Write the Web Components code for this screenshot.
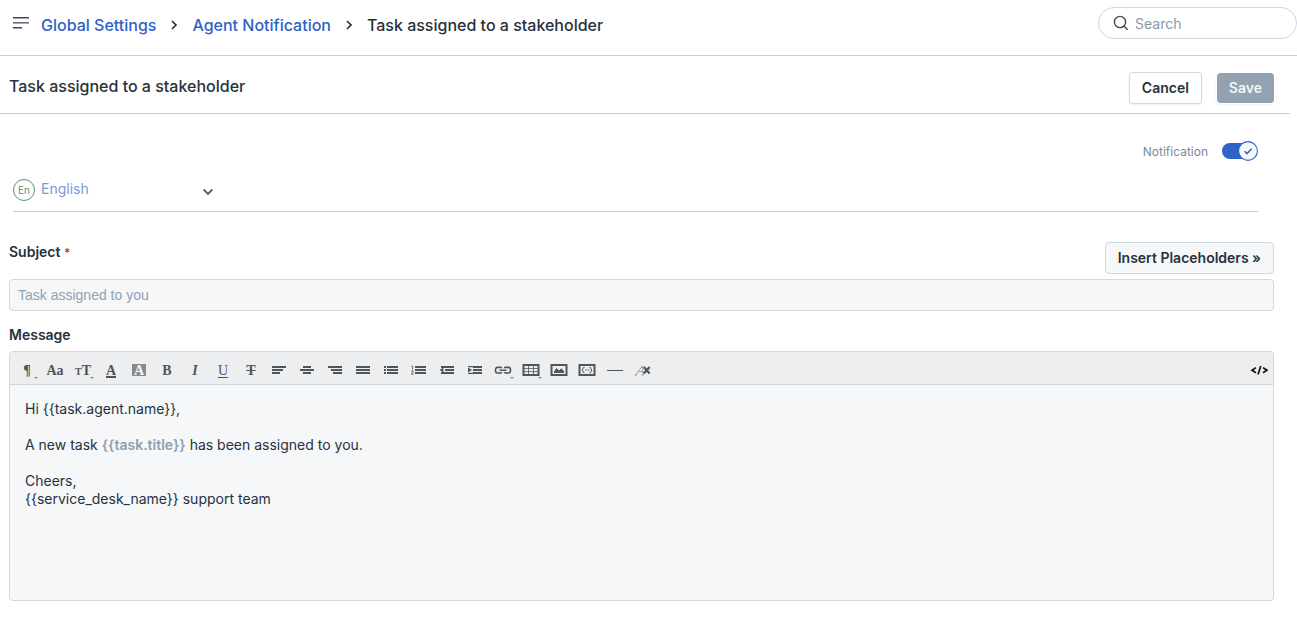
<!DOCTYPE html>
<html lang="en">
<head>
<meta charset="utf-8">
<meta name="viewport" content="width=device-width, initial-scale=1">
<title>Agent Notification - Task assigned to a stakeholder</title>
<style>
  :root {
    --ink: #27313d;
    --link: #2f62c6;
    --muted: #92a2b1;
    --line: #cfd7df;
    --rule: #c9ced0;
    --field: #f5f7f9;
  }
  body {
    margin: 0;
    background: #fff;
    color: var(--ink);
    font: 14px/18px Inter, "Liberation Sans", sans-serif;
  }
</style>
</head>
<body>
<notification-page></notification-page>

<script>
const define = (name, html, setup) => {
  const template = document.createElement('template');
  template.innerHTML = html;
  customElements.define(name, class extends HTMLElement {
    constructor() {
      super();
      this.attachShadow({ mode: 'open' }).append(template.content.cloneNode(true));
    }
    connectedCallback() { if (setup) setup(this, this.shadowRoot); }
  });
};

define('bread-crumbs', `
  <style>
    :host { display: block; font-size: 16px; line-height: 24px; font-weight: 500; }
    nav { display: flex; align-items: center; gap: 14px; }
    a { color: var(--link); text-decoration: none; }
    svg { width: 8px; height: 10px; fill: none; stroke: #27313d; stroke-width: 1.7; }
  </style>
  <nav aria-label="Breadcrumb">
    <a href="#settings">Global Settings</a>
    <svg viewBox="0 0 8 10"><path d="M2 1l4 4-4 4"/></svg>
    <a href="#agent">Agent Notification</a>
    <svg viewBox="0 0 8 10"><path d="M2 1l4 4-4 4"/></svg>
    <span aria-current="page">Task assigned to a stakeholder</span>
  </nav>`);

define('search-box', `
  <style>
    :host { display: block; }
    label { display: flex; align-items: center; gap: 6px; box-sizing: border-box; width: 199px; height: 32px;
      padding: 0 14px; border: 1px solid var(--line); border-radius: 16px; }
    svg { flex: none; width: 16px; height: 16px; fill: none; stroke: #3b4856; stroke-width: 1.4; }
    input { flex: 1; min-width: 0; border: 0; padding: 2px 0 0; outline: 0; background: none; color: inherit; font: inherit; }
    input::placeholder { color: #8a99a9; opacity: 1; }
  </style>
  <label aria-label="Search">
    <svg viewBox="0 0 16 16"><circle cx="7" cy="7" r="5.6"/><path d="M11 11l3.6 3.8"/></svg>
    <input type="text" placeholder="Search">
  </label>`);

define('app-header', `
  <style>
    :host { display: block; border-bottom: 1px solid var(--rule); }
    header { display: flex; align-items: flex-start; height: 48px; padding-top: 7px; padding-left: 13px; }
    .menu { width: 16px; height: 32px; margin-right: 12px; padding: 0; border: 0; background: none; }
    svg { display: block; width: 16px; height: 14px; }
    bread-crumbs { margin-top: 6px; }
    search-box { margin-left: auto; }
  </style>
  <header>
    <button class="menu" aria-label="Menu"><svg viewBox="0 0 16 14">
      <path fill="#3e4854" d="M0 1h16v1.5H0zM0 11h9v1.6H0z"/><path fill="#69727c" d="M0 6h16v1.6H0z"/></svg></button>
    <bread-crumbs></bread-crumbs>
    <search-box></search-box>
  </header>`);

define('ui-button', `
  <style>
    :host { display: block; }
    button { display: block; height: 32px; padding: 0 12px; border: 1px solid var(--line); border-radius: 4px;
      background: #fff; color: var(--ink); font: inherit; font-weight: 600; box-shadow: 0 1px 2px rgba(24,50,71,.08); }
    :host([kind=primary]) button { border-color: #fff; background: #92a2b1; background-clip: padding-box; color: #f2f5f7; }
    :host([kind=soft]) button { background: var(--field); box-shadow: none; }
  </style>
  <button type="button"><slot></slot></button>`);

define('title-bar', `
  <style>
    :host { display: flex; align-items: flex-start; justify-content: space-between; height: 41px;
      margin-right: 7px; padding: 16px 15px 0 9px; border-bottom: 1px solid var(--rule); }
    h1 { margin: 2px 0 0; font-size: 16px; line-height: 24px; font-weight: 500; }
    .actions { display: flex; gap: 14px; }
  </style>
  <h1>Task assigned to a stakeholder</h1>
  <div class="actions"><ui-button>Cancel</ui-button><ui-button kind="primary">Save</ui-button></div>`);

define('toggle-switch', `
  <style>
    :host { display: block; }
    label { display: flex; align-items: center; justify-content: flex-end; gap: 14px; height: 20px;
      color: #7c8b99; font-size: 12px; line-height: 18px; }
    .text { padding-top: 2px; }
    .track { display: grid; align-items: center; width: 36px; height: 20px; }
    input, .knob { grid-area: 1 / 1; margin: 0; }
    input { appearance: none; width: 34px; height: 16px; border-radius: 8px; background: #2f62c6; }
    .knob { justify-self: end; width: 20px; height: 20px; pointer-events: none; }
  </style>
  <label><span class="text"><slot></slot></span>
    <span class="track"><input type="checkbox" checked>
      <svg class="knob" viewBox="0 0 20 20"><circle cx="10" cy="10" r="9.4" fill="#f5f8fb" stroke="#2f62c6" stroke-width="1.1"/>
        <path d="M6.6 10.2l2.4 2.4 4.6-4.9" fill="none" stroke="#3566c4" stroke-width="1.5"/></svg></span>
  </label>`);

define('language-picker', `
  <style>
    :host { display: block; border-bottom: 1px solid var(--rule); }
    label { display: grid; grid-template-columns: 22px 173px; align-items: center; column-gap: 6px; height: 30px; padding-bottom: 7px; }
    .code { display: grid; place-items: center; box-sizing: border-box; width: 22px; height: 22px; margin-top: 2px;
      border: 1px solid #4f9a78; border-radius: 50%; color: #4f9a78; font-size: 10px; line-height: 12px; }
    select, svg { grid-row: 1; grid-column: 2; }
    select { appearance: none; border: 0; margin: 0; padding: 0; background: none; color: #7d97da; font: inherit; outline: 0; }
    svg { justify-self: end; width: 12px; height: 8px; margin-top: 5px; fill: none; stroke: #575d63; stroke-width: 1.8; pointer-events: none; }
  </style>
  <label aria-label="Language"><span class="code">En</span>
    <select><option>English</option></select>
    <svg viewBox="0 0 12 8"><path d="M1.6 1.5L6 5.9l4.4-4.4"/></svg>
  </label>`);

define('subject-field', `
  <style>
    :host { display: block; }
    .row { display: flex; align-items: flex-start; justify-content: space-between; margin-bottom: 5px; }
    label { margin-top: 1px; font-weight: 600; }
    .req { color: #c8373f; font-size: 12px; }
    input { display: block; box-sizing: border-box; width: 100%; height: 32px; padding: 0 8px; border: 1px solid var(--line);
      border-radius: 4px; background: var(--field); color: #92a2b1; font: 14px/18px "Liberation Sans", sans-serif; outline: 0; }
  </style>
  <div class="row"><label for="subject">Subject <span class="req">*</span></label>
    <ui-button kind="soft">Insert Placeholders »</ui-button></div>
  <input id="subject" type="text" value="Task assigned to you" readonly>`);

define('tool-button', `
  <style>
    :host { display: block; }
    button { position: relative; display: grid; place-items: center; width: 28px; height: 32px; padding: 6px 0 0; border: 0;
      background: none; color: #505559; font: 700 14px/16px "Liberation Serif", serif; }
    :host([menu]) button::after { content: ""; position: absolute; right: 3px; bottom: 5px;
      border: 2px solid transparent; border-top-color: #888d91; border-bottom: 0; }
  </style>
  <button type="button"><slot></slot></button>`, (host, root) => {
    root.querySelector('button').setAttribute('aria-label', host.getAttribute('name'));
  });

define('editor-toolbar', `
  <style>
    :host { display: flex; height: 32px; padding-left: 3px; border-bottom: 1px solid var(--line); background: #eceeef; border-radius: 3px 3px 0 0; }
    svg { display: block; width: 18px; height: 14px; margin-bottom: 2px; fill: #505559; }
    .line { fill: none; stroke: #505559; }
    .small { font-size: 10px; }
    .rule { height: 11px; line-height: 11px; border-bottom: 2px solid #505559; }
    .box { height: 12px; padding: 0 2px; margin-bottom: 2px; line-height: 13px; background: #888b8d; color: #f6f7f7; }
    .thin { font-weight: 400; text-decoration: underline; text-underline-offset: 2px; }
    .code { margin-left: auto; }
    .code svg { fill: none; stroke: #111; stroke-width: 1.7; }
  </style>
  <tool-button name="Paragraph format" menu>¶</tool-button>
  <tool-button name="Font family">Aa</tool-button>
  <tool-button name="Font size" menu><span><span class="small">T</span>T</span></tool-button>
  <tool-button name="Text color"><span class="rule">A</span></tool-button>
  <tool-button name="Background color"><span class="box">A</span></tool-button>
  <tool-button name="Bold">B</tool-button>
  <tool-button name="Italic"><i>I</i></tool-button>
  <tool-button name="Underline"><span class="thin">U</span></tool-button>
  <tool-button name="Strikethrough"><s>T</s></tool-button>
  <tool-button name="Align left"><svg viewBox="0 0 18 14"><path d="M2 3h14v2H2zM2 6h11v2H2zM2 9h8v2H2z"/></svg></tool-button>
  <tool-button name="Align center"><svg viewBox="0 0 18 14"><path d="M5 3h8v2H5zM2 6h14v2H2zM5 9h8v2H5z"/></svg></tool-button>
  <tool-button name="Align right"><svg viewBox="0 0 18 14"><path d="M2 3h14v2H2zM5 6h11v2H5zM7 9h9v2H7z"/></svg></tool-button>
  <tool-button name="Justify"><svg viewBox="0 0 18 14"><path d="M2 3h14v2H2zM2 6h14v2H2zM2 9h14v2H2z"/></svg></tool-button>
  <tool-button name="Bulleted list"><svg viewBox="0 0 18 14"><path d="M2 3h2v2H2zM5 3h11v2H5zM2 6h2v2H2zM5 6h11v2H5zM2 9h2v2H2zM5 9h11v2H5z"/></svg></tool-button>
  <tool-button name="Numbered list"><svg viewBox="0 0 18 14"><path d="M5 3h11v2H5zM5 6h11v2H5zM5 9h11v2H5z"/><path class="line" stroke-width=".9" d="M1.4 3.2h1.2v3.4M1.2 8h1.9v1.5L1.3 11.1h2.2"/></svg></tool-button>
  <tool-button name="Outdent"><svg viewBox="0 0 18 14"><path d="M3 3h13v2H3zM7 6h9v2H7zM3 9h13v2H3zM5.4 4.6v4.8L1.5 7z"/></svg></tool-button>
  <tool-button name="Indent"><svg viewBox="0 0 18 14"><path d="M2 3h14v2H2zM7 6h9v2H7zM2 9h14v2H2z"/><path fill="#eceeef" d="M1 4.2h6v5.6H1z"/><path d="M2 4.4v5.2L6 7z"/></svg></tool-button>
  <tool-button name="Link" menu><svg viewBox="0 0 18 14"><path class="line" stroke-width="1.6" d="M7.5 8.9v.3q0 .8-1 .8H3.4Q1.5 10 1.5 7.2T3.4 4.4h3.1q1 0 1 .9M10.5 5.3q0-.9 1-.9h3.1q1.9 0 1.9 2.8t-1.9 2.8h-3.1q-1 0-1-.9M5.5 7.2h7"/></svg></tool-button>
  <tool-button name="Table" menu><svg viewBox="0 0 18 14"><path class="line" stroke-width="2" d="M1.5 2h15v10h-15z"/><path class="line" stroke-width=".8" d="M2 5.5h14M2 8.6h14M6.5 2v10M11.5 2v10"/></svg></tool-button>
  <tool-button name="Image"><svg viewBox="0 0 18 14"><path class="line" stroke-width="2" d="M1.5 2h15v10h-15z"/><path d="M4 10V8.5L6.5 5 9 7.5l2.5-2.2L14 8.2V10z"/></svg></tool-button>
  <tool-button name="Code snippet"><svg viewBox="0 0 18 14"><path class="line" stroke-width="2" d="M1.5 2h15v10h-15z"/><path class="line" stroke-width="1" d="M6.5 4.5H5.8q-.8 0-.8.8v1L4 7l1 .8v1.1q0 .8.8.8h.7M11.5 4.5h.7q.8 0 .8.8v1l1 .7-1 .8v1.1q0 .8-.8.8h-.7M7 7h1M8.6 7h1M10.2 7h1"/></svg></tool-button>
  <tool-button name="Horizontal rule"><svg viewBox="0 0 18 14"><path d="M1 7h16v1H1z"/></svg></tool-button>
  <tool-button name="Clear formatting"><svg viewBox="0 0 18 14"><path class="line" stroke-width="1" style="stroke:#999ea1" d="M1.5 12L8.5 2.8l.6 9.2M4.2 8.6h4.6M.5 12h2.8M7.4 12h2.4"/><path class="line" stroke-width="2.2" d="M9.8 4l5.8 6.6M15.6 4l-5.8 6.6"/></svg></tool-button>
  <tool-button name="HTML source" class="code"><svg viewBox="0 0 18 14"><path d="M6 4.6L2 7.2l4 2.6M13 4.6l4 2.6-4 2.6M10.8 3L8 11.5"/></svg></tool-button>`);

define('message-editor', `
  <style>
    :host { display: block; }
    h2 { margin: 0 0 7px; font-size: 14px; line-height: 18px; font-weight: 600; }
    .frame { border: 1px solid var(--line); border-radius: 4px; background: var(--field); }
    .body { box-sizing: border-box; min-height: 215px; padding: 15px; outline: 0; line-height: 18px; }
  </style>
  <h2 id="label">Message</h2>
  <div class="frame"><editor-toolbar></editor-toolbar>
    <div class="body" role="textbox" aria-multiline="true" aria-labelledby="label"><slot></slot></div></div>`);

define('notification-page', `
  <style>
    :host { display: block; }
    toggle-switch { margin: 27px 39px 0 0; }
    language-picker { margin: 13px 39px 0 13px; }
    form { display: grid; gap: 15px; margin: 30px 23px 0 9px; }
    p { margin: 0 0 18px; }
    b { color: #8f9eac; font-weight: 600; }
  </style>
  <app-header></app-header>
  <main>
    <title-bar></title-bar>
    <toggle-switch>Notification</toggle-switch>
    <language-picker></language-picker>
    <form>
      <subject-field></subject-field>
      <message-editor>
        <p>Hi {{task.agent.name}},</p>
        <p>A new task <b>{{task.title}}</b> has been assigned to you.</p>
        <p>Cheers,<br>{{service_desk_name}} support team</p>
      </message-editor>
    </form>
  </main>`);
</script>
</body>
</html>
